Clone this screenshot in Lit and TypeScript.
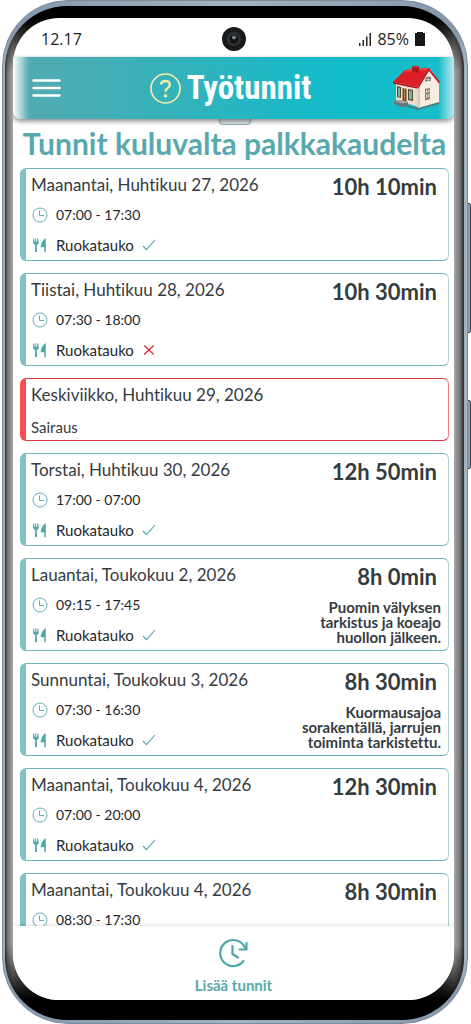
import { LitElement, html, css, svg, nothing } from "lit";
import { customElement, property } from "lit/decorators.js";

interface WorkEntry {
  date: string;
  time?: string;
  lunch?: boolean;
  total?: string;
  note?: string;
  absence?: string;
}

const ENTRIES: WorkEntry[] = [
  { date: "Maanantai, Huhtikuu 27, 2026", time: "07:00 - 17:30", lunch: true, total: "10h 10min" },
  { date: "Tiistai, Huhtikuu 28, 2026", time: "07:30 - 18:00", lunch: false, total: "10h 30min" },
  { date: "Keskiviikko, Huhtikuu 29, 2026", absence: "Sairaus" },
  { date: "Torstai, Huhtikuu 30, 2026", time: "17:00 - 07:00", lunch: true, total: "12h 50min" },
  {
    date: "Lauantai, Toukokuu 2, 2026", time: "09:15 - 17:45", lunch: true, total: "8h 0min",
    note: "Puomin välyksen tarkistus ja koeajo huollon jälkeen.",
  },
  {
    date: "Sunnuntai, Toukokuu 3, 2026", time: "07:30 - 16:30", lunch: true, total: "8h 30min",
    note: "Kuormausajoa sorakentällä, jarrujen toiminta tarkistettu.",
  },
  { date: "Maanantai, Toukokuu 4, 2026", time: "07:00 - 20:00", lunch: true, total: "12h 30min" },
  { date: "Maanantai, Toukokuu 4, 2026", time: "08:30 - 17:30", lunch: true, total: "8h 30min" },
];

const clockIcon = svg`<svg width="16" height="16" viewBox="0 0 16 16" fill="none" stroke="#5fb0b4" aria-hidden="true">
  <circle cx="8" cy="8" r="7"/><path d="M7.5 3.5v5h4.5"/></svg>`;

const cutleryIcon = svg`<svg width="16" height="16" viewBox="0 0 16 16" fill="#4fa7ac" aria-hidden="true">
  <path d="M1.2 1.5h.9l.3 3.6h.7l.2-3.8h.9l.2 3.8h.7l.3-3.6h.9l.5 3.8q.2 2.2-2 2.600l.2 7.200H3l.2-7.200Q1 7.500 1 5.500z"/>
  <path d="M13.800 1v14.200h-1.500V10.300H8.600Q9 4.200 13.800 1z"/></svg>`;

const checkIcon = svg`<svg width="14" height="14" viewBox="0 0 14 14" fill="none" stroke="#4fa7ac" stroke-width="1.1" role="img" aria-label="Kyllä">
  <path d="M1 8l3.500 3.700L13 2"/></svg>`;

const crossIcon = svg`<svg width="14" height="14" viewBox="0 0 14 14" fill="none" stroke="#e0202c" stroke-width="1.200" role="img" aria-label="Ei">
  <path d="M2.200 2.500l9.500 9M11.700 2.500l-9.500 9"/></svg>`;

const houseIcon = svg`<svg width="50" height="46" viewBox="0 0 50 46" aria-hidden="true">
  <path d="M12 39l14 4 21-6v2l-21 6-14-4z" fill="#57757c"/>
  <path d="M4 18l10-11 13 14v21L4 35z" fill="#e9ddcd"/>
  <path d="M25 22L38 4l9 13v20l-21 6z" fill="#f6ecdf"/>
  <path d="M25 22l1 21 2-1V20z" fill="#d9cab8"/>
  <path d="M1 17L13 5 37 3 25 22z" fill="#dc1f24"/>
  <path d="M13 5l24-2-2 2-22 2z" fill="#ee3d3a"/>
  <path d="M1 17l24 5v1.500L1 18.500z" fill="#a80f19"/>
  <path d="M25 22L37 3l11 14-1 1.500L37 6 26 24z" fill="#c41520"/>
  <path d="M20 2l5-1 2 1v6l-5-1-2-1z" fill="#a9161e"/><path d="M19 1.500l5-1 4 1-4 1z" fill="#d03231"/>
  <path d="M33 14.500q2-5 6-2v3l-6 1z" fill="#5c5854"/><path d="M36 11.500v4.500M33 15l6-1" stroke="#f2e8da" stroke-width=".8"/>
  <path d="M5 21l4 1v11l-4-1z" fill="#5b4730"/><path d="M6 22.500l2 .5v9l-2-.5z" fill="#6fb4b4"/>
  <path d="M16 24l5 1v11l-5-1z" fill="#5b4730"/><path d="M17 25.500l3 .5v8.500l-3-.5z" fill="#6fb4b4"/>
  <path d="M10.500 23l4 1v12.500l-4-1z" fill="#6d4822"/><path d="M12.500 24v11" stroke="#c99449" stroke-width=".8"/>
  <path d="M33 24l5-1v11l-5 1.500z" fill="#8a7860"/><path d="M34 25l1.300-.3v3l-1.300.3zM36.200 24.500l1.200-.3v3l-1.200.3zM34 29.500l1.300-.3v3.500l-1.300.3zM36.200 29l1.200-.3v3.500l-1.200.3z" fill="#e2ded0"/>
  <path d="M2 36l6-1 8 2v4l-6 1-8-3z" fill="#6d7478"/><path d="M2 36l6-1 8 2-5 1.500z" fill="#a2a5a4"/>
</svg>`;

@customElement("work-card")
class WorkCard extends LitElement {
  @property({ attribute: false }) entry!: WorkEntry;

  static styles = css`
    :host { display: block; }
    .card {
      display: flex;
      justify-content: space-between;
      border: 1px solid #6fb4b8;
      border-left: 6px solid #7fc1c5;
      border-right-color: #a9d3d3;
      border-radius: 6px;
      padding: 1px 7px 0 5px;
      background: #fff;
      color: #353c3f;
    }
    .absent { border-color: #d9363c; border-left-color: #f94d50; border-right-color: #ee7b7e; }
    .date { margin: 0; font-size: 17px; font-weight: 400; line-height: 30px; white-space: nowrap; }
    .row { display: flex; align-items: center; gap: 8px; height: 30px; padding-left: 1px; font-size: 15px; line-height: 18px; color: #24282a; }
    .time { font-size: 14px; }
    .reason { margin: 0; padding-top: 5px; font-size: 15px; line-height: 25px; }
    .side { display: flex; flex-direction: column; gap: 6px; width: 144px; height: 90px; text-align: right; font-weight: 700; }
    .total { margin: 0; padding-right: 4px; font-size: 22px; line-height: 34px; }
    .note { margin: 0; font-size: 15px; line-height: 15px; }
  `;

  render() {
    const e = this.entry;
    return html`<article class="card ${e.absence ? "absent" : ""}">
      <div>
        <h2 class="date">${e.date}</h2>
        ${e.absence
          ? html`<p class="reason">${e.absence}</p>`
          : html`<div class="row">${clockIcon}<span class="time">${e.time}</span></div>
              <div class="row">${cutleryIcon}<span>Ruokatauko</span>${e.lunch ? checkIcon : crossIcon}</div>`}
      </div>
      ${e.total
        ? html`<div class="side">
            <p class="total">${e.total}</p>
            ${e.note ? html`<p class="note">${e.note}</p>` : nothing}
          </div>`
        : nothing}
    </article>`;
  }
}

@customElement("app-root")
class AppRoot extends LitElement {
  static styles = css`
    :host { display: block; background: #fff; font-family: Lato, "Open Sans", sans-serif; font-variant-ligatures: none; }
    * { box-sizing: border-box; }
    button { border: 0; padding: 0; background: none; font: inherit; color: inherit; cursor: pointer; }
    svg { display: block; }
    .device { position: relative; height: 100vh; padding: 0 3px 0 2px; }
    .key { position: absolute; right: 0; width: 5px; border: 1px solid #3d444b; border-radius: 2px; background: #8d9baa; }
    .volume { top: 203px; height: 130px; }
    .power { top: 400px; height: 69px; }
    .frame {
      position: relative;
      height: 100%;
      padding: 5px 3px 3px 2px;
      border: 1px solid #7d8c9c;
      border-radius: 66px;
      background: linear-gradient(90deg, #9fb0c1, #8497ab 2%, #a3b2c0 50%, #8497ab 98%, #a9b7c4);
    }
    .bezel {
      height: 100%;
      padding: 12px 10px 20px 8px;
      border-radius: 62px;
      background:
        linear-gradient(#000 0 12px, transparent 66px calc(100% - 76px), #000 calc(100% - 20px)),
        linear-gradient(90deg, #34373b 0, #77787a 3px, #aaa6a4 8px, #000 60px calc(100% - 60px), #aaa9a8 calc(100% - 10px), #77787a calc(100% - 4px), #26292d 100%);
    }
    .screen {
      display: flex;
      flex-direction: column;
      height: 100%;
      overflow: hidden;
      border-radius: 46px;
      background: #fff;
    }
    .status {
      display: grid;
      grid-template-columns: 1fr auto 1fr;
      align-items: center;
      flex: none;
      height: 39px;
      padding: 2px 28px 0;
      font-family: "Open Sans", sans-serif;
      font-size: 16px;
      line-height: 22px;
      color: #222;
    }
    .system { display: flex; align-items: center; justify-content: flex-end; gap: 5px; }
    .bar {
      position: relative;
      z-index: 1;
      display: grid;
      grid-template-columns: 1fr auto 1fr;
      align-items: center;
      flex: none;
      height: 62px;
      padding: 0 12px 0 6px;
      border-radius: 0 0 8px 8px;
      background:
        linear-gradient(90deg, #fff, transparent 16px calc(100% - 16px), #ffffffb0),
        linear-gradient(90deg, #55aab0, #2cb4be 45%, #10bccb 75%, #18bdca);
      box-shadow: 0 2px 5px #00000080;
    }
    .menu { justify-self: start; padding-left: 12px; }
    .brand { display: flex; align-items: center; gap: 6px; }
    .name { margin: 0; font-family: "Liberation Sans Narrow", "Roboto Condensed", Roboto, sans-serif; font-size: 33px; line-height: 40px; font-weight: 700; color: #fff; }
    .home { justify-self: end; }
    .list { flex: 1; min-height: 0; overflow: hidden auto; scrollbar-width: none; padding: 0 5px 0 7px; }
    .handle { display: block; width: 32px; height: 6px; margin: 0 auto; border: 1px solid #8fb4b7; border-top: 0; border-radius: 0 0 4px 4px; background: #dfe6e7; }
    .heading { margin: 0 0 7px; font-size: 30px; line-height: 36px; font-weight: 700; text-align: center; white-space: nowrap; color: #58a9ad; }
    .cards { display: grid; gap: 12px; }
    .foot { position: relative; flex: none; display: flex; justify-content: center; height: 74px; background: #fff; box-shadow: 0 -1px 4px #0000001f; }
    .add { display: flex; flex-direction: column; align-items: center; gap: 7px; padding-top: 12px; font-size: 15px; line-height: 20px; font-weight: 700; color: #58a9ad; }
  `;

  render() {
    return html`<div class="device">
      <span class="key volume"></span>
      <span class="key power"></span>
      <div class="frame"><div class="bezel"><div class="screen">
        <div class="status">
          <span>12.17</span>
          <svg width="24" height="24" viewBox="0 0 24 24" aria-hidden="true">
            <circle cx="12" cy="12" r="12" fill="#191919"/><circle cx="12" cy="12" r="7" fill="#303236"/>
            <circle cx="12" cy="12" r="4.500" fill="#111318"/><circle cx="12" cy="10.500" r="2" fill="#7b858e"/>
          </svg>
          <div class="system">
            <svg width="14" height="14" viewBox="0 0 14 14" fill="#222" aria-hidden="true">
              <path d="M1 11h1.500v3H1zM4.500 8H6v6H4.500zM8 4.500h1.500V14H8zM11.500 1H13v13h-1.500z"/>
            </svg>
            <span>85%</span>
            <svg width="12" height="14" viewBox="0 0 12 14" fill="#181818" aria-hidden="true"><path d="M1 1h2V0h6v1h2v13H1z"/></svg>
          </div>
        </div>
        <header class="bar">
          <button class="menu" aria-label="Valikko">
            <svg width="32" height="20" viewBox="0 0 32 20" stroke="#fff" stroke-width="2.400" stroke-linecap="round"><path d="M2.500 2.500h26M2.500 10h26M2.500 17.500h26"/></svg>
          </button>
          <div class="brand">
            <button aria-label="Ohje">
              <svg width="31" height="31" viewBox="0 0 31 31" fill="none" stroke="#f3edab">
                <circle cx="15.500" cy="15.500" r="14.500" stroke-width="1.700"/>
                <path d="M11 11.500q.4-3.500 4.500-3.500 4.300.2 4.300 3.700 0 2-2.300 3.500-2 1.300-2 3.600" stroke-width="2.300"/>
                <circle cx="15.500" cy="22.800" r="1.800" fill="#f3edab" stroke="none"/>
              </svg>
            </button>
            <h1 class="name">Työtunnit</h1>
          </div>
          <button class="home" aria-label="Etusivu">${houseIcon}</button>
        </header>
        <main class="list">
          <button class="handle" aria-label="Näytä lisää"></button>
          <h2 class="heading">Tunnit kuluvalta palkkakaudelta</h2>
          <div class="cards">${ENTRIES.map((e) => html`<work-card .entry=${e}></work-card>`)}</div>
        </main>
        <footer class="foot">
          <button class="add">
            <svg width="32" height="30" viewBox="0 0 32 30" fill="none" stroke="#4fa7ac" stroke-width="2.200" stroke-linecap="round" stroke-linejoin="round" aria-hidden="true">
              <path d="M28 9.500A13 13 0 1 0 26.500 23"/><path d="M29.500 5v6.500h-7"/><path d="M15.500 8v8l5.500 3.500"/>
            </svg>
            <span>Lisää tunnit</span>
          </button>
        </footer>
      </div></div></div>
    </div>`;
  }
}
